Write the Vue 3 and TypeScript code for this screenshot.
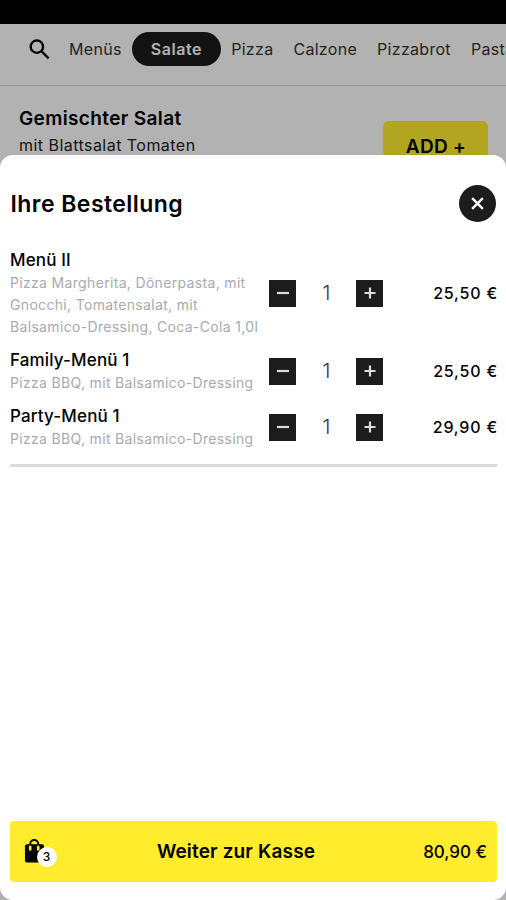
<script setup lang="ts">
import { computed, ref } from 'vue'

interface OrderItem {
  id: number
  name: string
  details: string
  quantity: number
  price: number
}

const categories: string[] = ['Menüs', 'Salate', 'Pizza', 'Calzone', 'Pizzabrot', 'Pasta']
const active = ref('Salate')
const open = ref(true)

const items = ref<OrderItem[]>([
  { id: 1, name: 'Menü II', details: 'Pizza Margherita, Dönerpasta, mit Gnocchi, Tomatensalat, mit Balsamico-Dressing, Coca-Cola 1,0l', quantity: 1, price: 25.5 },
  { id: 2, name: 'Family-Menü 1', details: 'Pizza BBQ, mit Balsamico-Dressing', quantity: 1, price: 25.5 },
  { id: 3, name: 'Party-Menü 1', details: 'Pizza BBQ, mit Balsamico-Dressing', quantity: 1, price: 29.9 },
])

const count = computed(() => items.value.reduce((sum, i) => sum + i.quantity, 0))
const total = computed(() => items.value.reduce((sum, i) => sum + i.quantity * i.price, 0))

function euro(value: number): string {
  return value.toFixed(2).replace('.', ',') + ' €'
}

function change(item: OrderItem, by: number): void {
  item.quantity = Math.max(0, item.quantity + by)
}
</script>

<template>
  <div class="screen">
    <div class="status-bar"></div>
    <nav class="categories">
      <svg class="search" viewBox="0 0 20 20">
        <circle cx="7.5" cy="7.3" r="5.9" />
        <path d="M11.8 11.6 18.7 18.4" />
      </svg>
      <button
        v-for="category in categories"
        :key="category"
        class="category"
        :class="{ active: category === active }"
        @click="active = category"
      >{{ category }}</button>
    </nav>
    <section class="dish">
      <div>
        <h3 class="dish-name">Gemischter Salat</h3>
        <p class="dish-text">mit Blattsalat Tomaten</p>
      </div>
      <button class="add">ADD +</button>
    </section>

    <div v-if="open" class="overlay">
      <div class="sheet">
        <header class="sheet-head">
          <h2 class="title">Ihre Bestellung</h2>
          <button class="close" aria-label="Schließen" @click="open = false">
            <svg viewBox="0 0 14 14"><path d="M2 2 12 12M12 2 2 12" /></svg>
          </button>
        </header>
        <ul class="items">
          <li v-for="item in items" :key="item.id" class="item">
            <div class="info">
              <h4 class="name">{{ item.name }}</h4>
              <p class="details">{{ item.details }}</p>
            </div>
            <div class="stepper">
              <button class="step" aria-label="Weniger" @click="change(item, -1)">
                <svg viewBox="0 0 12 12"><path d="M0 6H12" /></svg>
              </button>
              <span class="quantity">{{ item.quantity }}</span>
              <button class="step" aria-label="Mehr" @click="change(item, 1)">
                <svg viewBox="0 0 12 12"><path d="M.5 6H11.5M6 .5V11.5" /></svg>
              </button>
            </div>
            <span class="price">{{ euro(item.price) }}</span>
          </li>
        </ul>
        <button class="checkout">
          <span class="bag">
            <svg viewBox="0 0 22 26">
              <rect x="1" y="6" width="20" height="19" rx="2" />
              <path class="handle" d="M6.500 8V5.700A4.200 4.200 0 0 1 14.900 5.700V8" />
              <path class="loop" d="M6.500 8.500V11.500M14.900 8.500V11.500" />
            </svg>
            <span class="badge">{{ count }}</span>
          </span>
          <span class="checkout-label">Weiter zur Kasse</span>
          <span class="total">{{ euro(total) }}</span>
        </button>
      </div>
    </div>
  </div>
</template>

<style>
body {
  margin: 0;
  overflow: hidden;
}
</style>

<style scoped>
.screen {
  position: relative;
  width: 506px;
  height: 900px;
  overflow: hidden;
  background: #fff;
  color: #000;
  font-family: Inter, 'Liberation Sans', sans-serif;
}

button {
  border: 0;
  padding: 0;
  margin: 0;
  background: none;
  color: inherit;
  font-family: inherit;
}

h2,
h3,
h4,
p,
ul {
  margin: 0;
  padding: 0;
}

.status-bar {
  height: 24px;
  background: #000;
}

.categories {
  box-sizing: border-box;
  display: flex;
  align-items: flex-start;
  height: 62px;
  padding: 8px 0 0 29px;
  border-bottom: 1px solid #dcdcdc;
  overflow: hidden;
}

.search {
  flex: none;
  width: 21px;
  height: 21px;
  margin: 7px 9px 0 0;
  fill: none;
  stroke: #000;
  stroke-width: 2.2;
}

.category {
  flex: none;
  height: 34px;
  padding: 0 10px;
  font-size: 16px;
  letter-spacing: 0.3px;
  color: #333;
}

.category.active {
  padding: 0 19px;
  border-radius: 17px;
  background: #1c1c1c;
  color: #fff;
  font-weight: 600;
  letter-spacing: 0.6px;
}

.dish {
  display: flex;
  justify-content: space-between;
  padding: 20px 18px 0 19px;
}

.dish-name {
  font-size: 19px;
  line-height: 26px;
  font-weight: 600;
  letter-spacing: 0.37px;
}

.dish-text {
  margin-top: 2px;
  font-size: 16px;
  line-height: 22px;
  letter-spacing: 0.46px;
  color: #222;
}

.add {
  width: 105px;
  height: 50px;
  margin-top: 15px;
  border-radius: 6px;
  background: #ffec2d;
  font-size: 19px;
  font-weight: 600;
  letter-spacing: 0.3px;
  text-indent: 1px;
}

.overlay {
  position: absolute;
  inset: 24px 0 0;
  box-sizing: border-box;
  padding-top: 131px;
  background: rgba(0, 0, 0, 0.3);
}

.sheet {
  box-sizing: border-box;
  display: flex;
  flex-direction: column;
  height: 745px;
  padding: 30px 9px 18px 10px;
  border-radius: 13px;
  background: #fff;
}

.sheet-head {
  display: flex;
  align-items: center;
  justify-content: space-between;
  height: 37px;
}

.title {
  padding-left: 0.5px;
  font-size: 23px;
  font-weight: 600;
  letter-spacing: 0.45px;
}

.close {
  display: flex;
  align-items: center;
  justify-content: center;
  width: 37px;
  height: 37px;
  margin-right: 1px;
  border-radius: 50%;
  background: #1c1c1c;
}

.close svg {
  width: 15px;
  height: 15px;
  fill: none;
  stroke: #fff;
  stroke-width: 2.2;
}

.items {
  list-style: none;
  margin-top: 26px;
  padding-bottom: 14px;
  border-bottom: 3px solid #d9dadc;
}

.item {
  display: grid;
  grid-template-columns: 259px 114px 1fr;
  align-items: center;
}

.item + .item {
  margin-top: 10px;
}

.name {
  font-size: 17px;
  line-height: 24px;
  font-weight: 500;
  letter-spacing: 0.15px;
}

.details {
  font-size: 14px;
  line-height: 22px;
  letter-spacing: 0.33px;
  color: #a8abb0;
}

.stepper {
  display: flex;
  align-items: center;
  justify-content: space-between;
}

.step {
  display: flex;
  align-items: center;
  justify-content: center;
  width: 27px;
  height: 27px;
  background: #1c1c1c;
}

.step svg {
  width: 12px;
  height: 12px;
  fill: none;
  stroke: #dcdcdc;
  stroke-width: 2.2;
}

.quantity {
  padding-left: 1px;
  font-size: 20px;
  font-weight: 300;
  color: #333;
}

.price {
  margin-right: -1px;
  text-align: right;
  font-size: 16px;
  font-weight: 500;
  letter-spacing: 0.8px;
}

.checkout {
  display: grid;
  grid-template-columns: 41px 1fr 80px;
  align-items: center;
  height: 61px;
  margin-top: auto;
  padding: 0 10px 0 14px;
  border-radius: 4px;
  background: #ffec2d;
}

.bag {
  position: relative;
  width: 33px;
  height: 27px;
}

.bag svg {
  display: block;
  width: 21px;
  height: 26px;
}

.handle {
  fill: none;
  stroke: #000;
  stroke-width: 2;
}

.loop {
  stroke: #ffec2d;
  stroke-width: 2.7;
  stroke-linecap: round;
}

.badge {
  position: absolute;
  right: 0.5px;
  bottom: -2px;
  width: 20px;
  height: 20px;
  border-radius: 50%;
  background: #fff;
  font-size: 12px;
  font-weight: 500;
  line-height: 20px;
  text-align: center;
}

.checkout-label {
  font-size: 19px;
  font-weight: 600;
  letter-spacing: 0.15px;
}

.total {
  text-align: right;
  white-space: nowrap;
  font-size: 17px;
  font-weight: 500;
}
</style>
